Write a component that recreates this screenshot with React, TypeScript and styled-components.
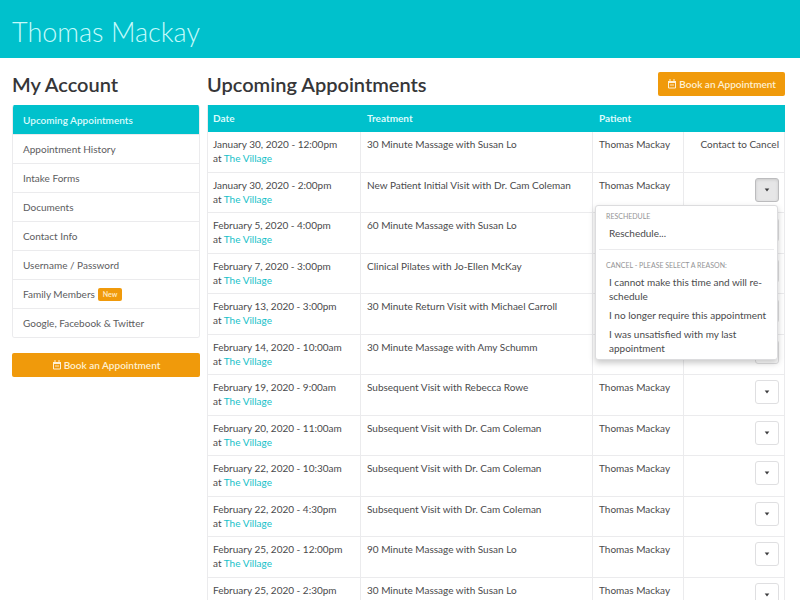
import React from "react";
import styled, { createGlobalStyle } from "styled-components";

const teal = "#00c1cc";
const orange = "#f09a0b";
const line = "#ebebed";

const GlobalStyle = createGlobalStyle`
  *, *::before, *::after { box-sizing: border-box; }
  html { height: 100%; overflow: hidden; }
  body {
    margin: 0;
    background: #fff;
    color: #4a4a4c;
    font-family: Lato, "Liberation Sans", sans-serif;
    font-size: 10px;
    line-height: 14px;
  }
  a { color: inherit; text-decoration: none; }
  button { font: inherit; cursor: pointer; }
`;

const Banner = styled.header`
  background: ${teal};
  padding: 16px 12px 10px;
`;

const PatientName = styled.h1`
  margin: 0;
  color: #c4fafb;
  font-size: 27px;
  font-weight: 300;
  line-height: 32px;
`;

const Page = styled.div`
  display: grid;
  grid-template-columns: 188px minmax(0, 1fr);
  align-items: start;
  gap: 7px;
  padding: 13px 15px 0 12px;
`;

const Sidebar = styled.aside`
  display: flex;
  flex-direction: column;
  gap: 15px;
`;

const Heading = styled.h2`
  margin: 0;
  color: #363638;
  font-size: 20px;
  font-weight: 600;
  line-height: 26px;
`;

const TitleBar = styled.div`
  display: flex;
  align-items: center;
  justify-content: space-between;
  height: 34px;
  padding-bottom: 8px;
`;

const AccountNav = styled.nav`
  border: 1px solid ${line};
  border-top: 0;
  border-radius: 3px;
  overflow: hidden;
`;

const NavLink = styled.a<{ $active?: boolean }>`
  display: flex;
  align-items: center;
  gap: 3px;
  height: 29px;
  padding: 0 10px;
  border-top: 1px solid ${(p) => (p.$active ? teal : line)};
  background: ${(p) => (p.$active ? teal : "#fff")};
  color: ${(p) => (p.$active ? "#dcfbfc" : "#5c5c5e")};
  font-weight: ${(p) => (p.$active ? 600 : 400)};
`;

const Badge = styled.span`
  padding: 0 5px;
  border-radius: 2px;
  background: ${orange};
  color: #ffe9c0;
  font-size: 7px;
  font-weight: 700;
  line-height: 13px;
`;

const BookButton = styled.button`
  display: flex;
  align-items: center;
  justify-content: center;
  gap: 2px;
  height: 24px;
  padding: 0 9px;
  border: 0;
  border-radius: 2px;
  background: ${orange};
  color: #fff0d2;
  font-weight: 600;
`;

const Table = styled.table`
  width: 100%;
  table-layout: fixed;
  border-collapse: separate;
  border-spacing: 0;
  border-left: 1px solid ${line};
`;

const HeadCell = styled.th<{ $width?: number }>`
  width: ${(p) => (p.$width ? p.$width + "px" : "auto")};
  height: 27px;
  padding: 0 6px 2px;
  background: ${teal};
  color: #dcfbfc;
  font-weight: 700;
  text-align: left;
  &:first-child { padding-left: 5px; }
`;

const Row = styled.tr`
  height: 41px;
  &:nth-child(even) { height: 40px; }
`;

const Cell = styled.td<{ $end?: boolean }>`
  padding: 5px 5px 0 6px;
  border-right: 1px solid ${line};
  border-bottom: 1px solid ${line};
  vertical-align: top;
  text-align: ${(p) => (p.$end ? "right" : "left")};
  &:first-child { padding-left: 5px; }
`;

const ClinicLink = styled.a`
  && { color: #16bfc9; }
`;

const MenuAnchor = styled.div`
  position: relative;
  display: flex;
  justify-content: flex-end;
`;

const MenuToggle = styled.button<{ $open?: boolean }>`
  display: grid;
  place-items: center;
  width: 24px;
  height: 24px;
  padding: 0;
  border: 1px solid ${(p) => (p.$open ? "#bcbcbe" : "#dfdfe1")};
  border-radius: 3px;
  background: ${(p) => (p.$open ? "#e6e6e7" : "#fff")};
  box-shadow: ${(p) => (p.$open ? "inset 0 1px 3px rgba(0, 0, 0, 0.12)" : "none")};
`;

const Menu = styled.div`
  position: absolute;
  z-index: 2;
  top: 27px;
  right: 1px;
  width: 183px;
  padding: 3px 0 2px;
  border: 1px solid #dcdcde;
  border-radius: 3px;
  background: #fff;
  box-shadow: 0 3px 6px rgba(0, 0, 0, 0.22);
  text-align: left;
`;

const MenuLabel = styled.div`
  padding: 0 10px;
  color: #949496;
  font-size: 7px;
  line-height: 14px;
  text-transform: uppercase;
`;

const MenuRule = styled.hr`
  height: 1px;
  margin: 7px 3px 8px;
  border: 0;
  background: ${line};
`;

const MenuItem = styled.a`
  display: block;
  padding: 3px 6px 2px 13px;
`;

const CalendarIcon = () => (
  <svg width="10" height="10" viewBox="0 0 10 10" fill="none" stroke="currentColor" aria-hidden="true">
    <path d="M1.5 2v7h7V2" />
    <path d="M1 3h8" strokeWidth="2" />
    <path d="M3 0v3M7 0v3" />
    <path d="M3 6h4" strokeWidth="2" opacity="0.45" />
  </svg>
);

const Caret = () => (
  <svg width="6" height="4" viewBox="0 0 6 4" fill="#3c3c3e" aria-hidden="true">
    <path d="M0.7 0.5h4.6L3 3.5z" />
  </svg>
);

const Book = () => (
  <BookButton type="button">
    <CalendarIcon />
    Book an Appointment
  </BookButton>
);

const links = [
  "Upcoming Appointments",
  "Appointment History",
  "Intake Forms",
  "Documents",
  "Contact Info",
  "Username / Password",
  "Family Members",
  "Google, Facebook & Twitter",
];

const appointments: [string, string][] = [
  ["January 30, 2020 - 12:00pm", "30 Minute Massage with Susan Lo"],
  ["January 30, 2020 - 2:00pm", "New Patient Initial Visit with Dr. Cam Coleman"],
  ["February 5, 2020 - 4:00pm", "60 Minute Massage with Susan Lo"],
  ["February 7, 2020 - 3:00pm", "Clinical Pilates with Jo-Ellen McKay"],
  ["February 13, 2020 - 3:00pm", "30 Minute Return Visit with Michael Carroll"],
  ["February 14, 2020 - 10:00am", "30 Minute Massage with Amy Schumm"],
  ["February 19, 2020 - 9:00am", "Subsequent Visit with Rebecca Rowe"],
  ["February 20, 2020 - 11:00am", "Subsequent Visit with Dr. Cam Coleman"],
  ["February 22, 2020 - 10:30am", "Subsequent Visit with Dr. Cam Coleman"],
  ["February 22, 2020 - 4:30pm", "Subsequent Visit with Dr. Cam Coleman"],
  ["February 25, 2020 - 12:00pm", "90 Minute Massage with Susan Lo"],
  ["February 25, 2020 - 2:30pm", "30 Minute Massage with Susan Lo"],
];

const ActionsMenu = () => (
  <Menu>
    <MenuLabel>Reschedule</MenuLabel>
    <MenuItem href="#reschedule">Reschedule...</MenuItem>
    <MenuRule />
    <MenuLabel>Cancel - please select a reason:</MenuLabel>
    <MenuItem href="#cancel-time">I cannot make this time and will re-schedule</MenuItem>
    <MenuItem href="#cancel-not-required">I no longer require this appointment</MenuItem>
    <MenuItem href="#cancel-unsatisfied">I was unsatisfied with my last appointment</MenuItem>
  </Menu>
);

export default function App() {
  const [openRow, setOpenRow] = React.useState(1);
  return (
    <>
      <GlobalStyle />
      <Banner>
        <PatientName>Thomas Mackay</PatientName>
      </Banner>
      <Page>
        <Sidebar>
          <div>
            <TitleBar>
              <Heading>My Account</Heading>
            </TitleBar>
            <AccountNav aria-label="My Account">
              {links.map((label, i) => (
                <NavLink key={label} href="#account" $active={i === 0}>
                  {label}
                  {label === "Family Members" && <Badge>New</Badge>}
                </NavLink>
              ))}
            </AccountNav>
          </div>
          <Book />
        </Sidebar>
        <main>
          <TitleBar>
            <Heading>Upcoming Appointments</Heading>
            <Book />
          </TitleBar>
          <Table>
            <thead>
              <tr>
                <HeadCell $width={153}>Date</HeadCell>
                <HeadCell>Treatment</HeadCell>
                <HeadCell $width={91}>Patient</HeadCell>
                <HeadCell $width={101} aria-label="Actions" />
              </tr>
            </thead>
            <tbody>
              {appointments.map(([date, treatment], i) => (
                <Row key={date}>
                  <Cell>
                    {date}
                    <br />
                    at <ClinicLink href="#village">The Village</ClinicLink>
                  </Cell>
                  <Cell>{treatment}</Cell>
                  <Cell>Thomas Mackay</Cell>
                  <Cell $end>
                    {i === 0 ? (
                      "Contact to Cancel"
                    ) : (
                      <MenuAnchor>
                        <MenuToggle
                          type="button"
                          aria-label="Appointment actions"
                          aria-expanded={openRow === i}
                          $open={openRow === i}
                          onClick={() => setOpenRow(openRow === i ? -1 : i)}
                        >
                          <Caret />
                        </MenuToggle>
                        {openRow === i && <ActionsMenu />}
                      </MenuAnchor>
                    )}
                  </Cell>
                </Row>
              ))}
            </tbody>
          </Table>
        </main>
      </Page>
    </>
  );
}
